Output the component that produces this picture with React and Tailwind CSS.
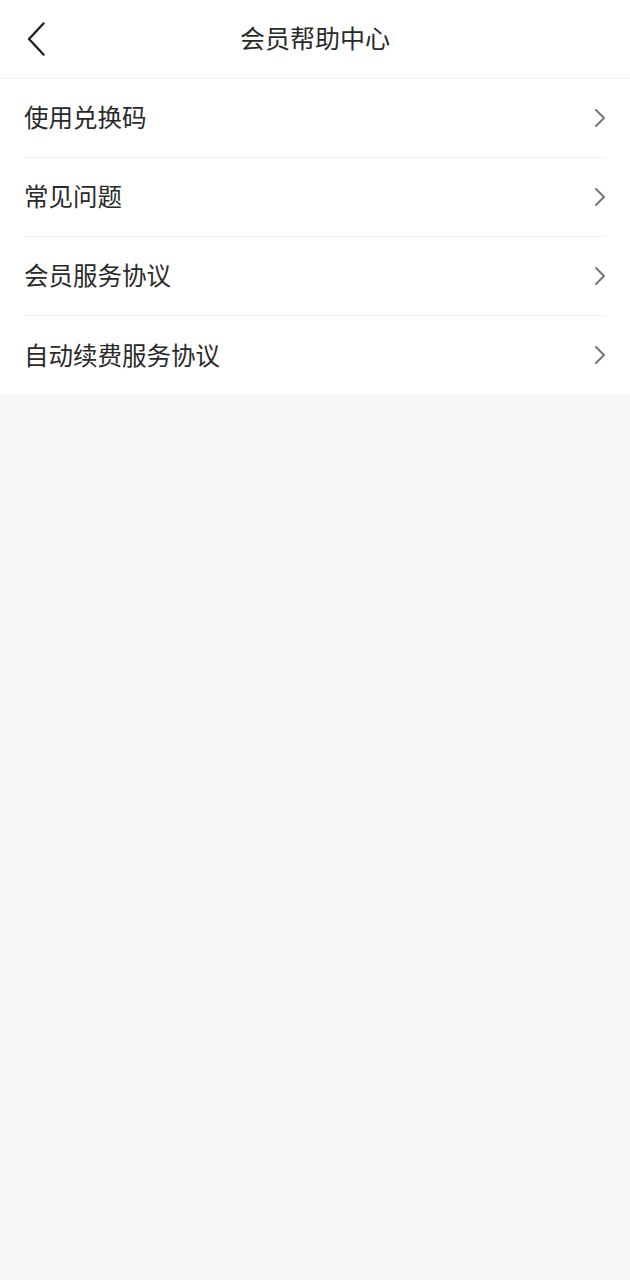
import React from "react";

const items = ["使用兑换码", "常见问题", "会员服务协议", "自动续费服务协议"];

const font = { fontFamily: '"Noto Sans CJK SC", "Noto Sans", sans-serif' };

export default function App() {
  return (
    <div className="min-h-[1280px] bg-[#f8f8f8]" style={font}>
      {/* Header */}
      <div className="relative flex h-[79px] items-center justify-center border-b border-[#eeeeee] bg-white pb-[3px]">
        <button className="absolute left-[24px] top-[20px] flex h-[38px] w-[24px] items-center justify-center">
          <svg width="20" height="34" viewBox="0 0 20 34" fill="none">
            <path d="M17.5 1.5 L3 17 L17.5 32.5" stroke="#222" strokeWidth="2.4" strokeLinecap="round" strokeLinejoin="round" />
          </svg>
        </button>
        <h1 className="text-[25px] leading-none text-[#2a2a2a]">会员帮助中心</h1>
      </div>

      {/* List */}
      <div className="bg-white px-[24px]">
        {items.map((label, i) => (
          <div
            key={label}
            className={`flex h-[79px] items-center justify-between pb-[1px] ${
              i < items.length - 1 ? "border-b border-[#f0f0f0]" : ""
            }`}
          >
            <span className="text-[24.5px] leading-none text-[#2a2a2a]">{label}</span>
            <svg width="12" height="20" viewBox="0 0 12 20" fill="none">
              <path d="M2 2 L10 10 L2 18" stroke="#777" strokeWidth="2" strokeLinecap="round" strokeLinejoin="round" />
            </svg>
          </div>
        ))}
      </div>
    </div>
  );
}
